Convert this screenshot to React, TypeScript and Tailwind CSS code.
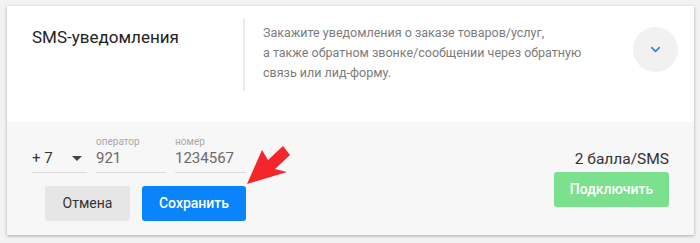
import React from 'react'
import { ChevronDown } from 'lucide-react'

// Карточка SMS-уведомлений: описание сверху, форма номера снизу
function PhoneField({
  label,
  value,
  width,
}: {
  label: string
  value: string
  width: string
}) {
  return (
    <div className={`flex flex-col ${width} border-b border-[#dcdcdc] pb-[4px]`}>
      <span className="text-[10px] leading-[12px] text-[#a8a8a8]">{label}</span>
      <span className="text-[15px] leading-[20px] text-[#6a6a6a]">{value}</span>
    </div>
  )
}

function RedArrow() {
  return (
    <svg
      className="absolute left-[240px] top-[140px] pointer-events-none"
      width="60"
      height="50"
      viewBox="240 140 60 50"
    >
      <polygon
        points="247,184 262,150 268,160 283,146 290,155 275,169 287,172"
        fill="#f5262b"
      />
    </svg>
  )
}

export default function App() {
  return (
    <div
      className="relative w-[700px] h-[243px] bg-[#f2f2f2] pt-[6px] pl-[7px]"
      style={{ fontFamily: 'Roboto, "Liberation Sans", sans-serif' }}
    >
      <div className="w-[687px] h-[229px] bg-white shadow-[0_1px_3px_rgba(0,0,0,0.3)] flex flex-col">
        <div className="flex h-[116px] pl-[25px] pr-[16px]">
          <div className="w-[211px] pt-[19px] text-[17px] leading-[24px] text-[#222]">
            SMS-уведомления
          </div>
          <div className="flex-1 mt-[12px] self-start border-l-2 border-[#ececec] pl-[18px] pt-[5px] pb-[8px] text-[12.5px] leading-[20px] text-[#7c7c7c]">
            Закажите уведомления о заказе товаров/услуг,
            <br />
            а также обратном звонке/сообщении через обратную
            <br />
            связь или лид-форму.
          </div>
          <div className="mt-[21px] w-[45px] h-[45px] rounded-full bg-[#f1f1f1] flex items-center justify-center">
            <ChevronDown size={15} strokeWidth={2.5} color="#2f7ff0" />
          </div>
        </div>
        <div className="flex-1 bg-[#f7f7f7] flex justify-between px-[25px] pt-[14px]">
          <div className="flex flex-col">
            <div className="flex items-end gap-[9px]">
              <div className="flex items-center justify-between w-[55px] border-b border-[#dcdcdc] pb-[4px]">
                <span className="text-[15px] leading-[20px] text-[#333]">+ 7</span>
                <span className="mr-[5px] w-0 h-0 border-l-[5px] border-r-[5px] border-t-[5px] border-l-transparent border-r-transparent border-t-[#444]" />
              </div>
              <PhoneField label="оператор" value="921" width="w-[70px]" />
              <PhoneField label="номер" value="1234567" width="w-[71px]" />
            </div>
            <div className="flex gap-[12px] mt-[13px] ml-[13px]">
              <button className="w-[85px] h-[35px] rounded-[3px] bg-[#e6e6e6] text-[14px] text-[#333]">
                Отмена
              </button>
              <button className="w-[104px] h-[35px] rounded-[3px] bg-[#0a84fb] text-[14px] font-medium text-white">
                Сохранить
              </button>
            </div>
          </div>
          <div className="flex flex-col items-end pt-[13px]">
            <span className="text-[15.5px] leading-[20px] text-[#333]">2 балла/SMS</span>
            <button className="mt-[3px] w-[115px] h-[35px] rounded-[3px] bg-[#7ce18f] text-[14px] font-medium text-white">
              Подключить
            </button>
          </div>
        </div>
      </div>
      <RedArrow />
    </div>
  )
}
